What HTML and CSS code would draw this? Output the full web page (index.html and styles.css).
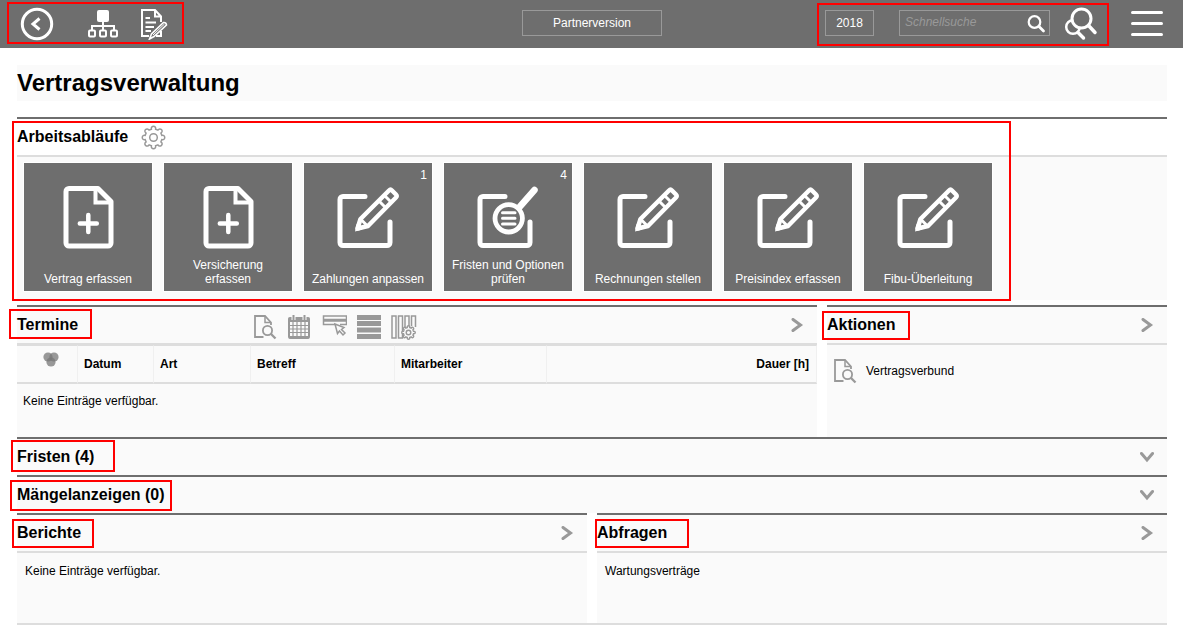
FILE: index.html
```html
<!DOCTYPE html>
<html lang="de">
<head>
<meta charset="utf-8">
<title>Vertragsverwaltung</title>
<link rel="stylesheet" href="styles.css">
</head>
<body>
<svg class="sprite" aria-hidden="true">
  <symbol id="doc-plus" viewBox="0 0 64 64">
    <g fill="none" stroke="#fff" stroke-width="5" stroke-linejoin="round" stroke-linecap="round">
      <path d="M13 3.500H42L55 16.500V58a3 3 0 0 1-3 3H13a3 3 0 0 1-3-3V6.500a3 3 0 0 1 3-3Z"/>
      <path d="M39.500 5V17.500H54" stroke-width="4" stroke-linejoin="miter"/>
      <path d="M32.300 30V47M23.800 38.500H40.800" stroke-width="4.500"/>
    </g>
  </symbol>
  <symbol id="edit" viewBox="0 0 64 64">
    <g fill="none" stroke="#fff" stroke-width="5" stroke-linejoin="round" stroke-linecap="round">
      <path d="M29 11.500H7a3 3 0 0 0-3 3V57.500a3 3 0 0 0 3 3H51a3 3 0 0 0 3-3V37"/>
      <path d="M21.500 43.500L24.500 34L53 5.500Q54.500 4 56 5.500L60 9.500Q61.500 11 60 12.500L32 41Z" stroke-width="4.500"/>
      <path d="M25 34.500L31 40.500M43 16L49.500 22.500M48.500 10.500L55 17" stroke-width="3"/>
      <path d="M19 46.500L20.500 39L26.500 44.500Z" fill="#fff" stroke="none"/>
    </g>
  </symbol>
  <symbol id="inspect" viewBox="0 0 64 64">
    <g fill="none" stroke="#fff" stroke-width="5" stroke-linejoin="round" stroke-linecap="round">
      <path d="M29 11.500H7a3 3 0 0 0-3 3V57.500a3 3 0 0 0 3 3H51a3 3 0 0 0 3-3V37"/>
      <circle cx="32.700" cy="33.300" r="18" fill="#6e6e6e" stroke="none"/>
      <circle cx="32.700" cy="33.300" r="13.700" stroke-width="4.800"/>
      <path d="M44 21.500L58.500 5" stroke-width="6.500"/>
      <path d="M26.500 27.700H39M26.500 33.300H39M26.500 39H39" stroke-width="3"/>
    </g>
  </symbol>
  <symbol id="doc-search" viewBox="0 0 24 26">
    <g fill="none" stroke="#999" stroke-width="1.800">
      <path d="M10.500 23H2V2H12L18 8.500V11"/>
      <path d="M12 2V8.500H18" stroke-width="1.500"/>
      <circle cx="14.500" cy="16.500" r="4.600"/>
      <path d="M17.800 19.800L22.500 24.500" stroke-width="2.300"/>
    </g>
  </symbol>
  <symbol id="gear" viewBox="0 0 25 25">
    <path d="M10.400 4.200C9.500.3 15.500.3 14.600 4.200L16.900 5.100C19 1.800 23.200 6 19.900 8.100L20.800 10.400C24.700 9.500 24.700 15.500 20.800 14.600L19.900 16.900C23.200 19 19 23.200 16.900 19.900L14.600 20.800C15.500 24.700 9.500 24.700 10.400 20.800L8.100 19.900C6 23.200 1.800 19 5.100 16.900L4.200 14.600C.3 15.500.3 9.500 4.200 10.400L5.100 8.100C1.800 6 6 1.800 8.100 5.100Z"/>
    <circle cx="12.500" cy="12.500" r="3.800"/>
  </symbol>
  <symbol id="chevron-right" viewBox="0 0 14 14">
    <path d="M3 1.500L10.500 7L3 12.500" fill="none" stroke="#999" stroke-width="3" stroke-linecap="round"/>
  </symbol>
  <symbol id="chevron-down" viewBox="0 0 14 14">
    <path d="M1.500 3.500L7 10L12.500 3.500" fill="none" stroke="#999" stroke-width="3" stroke-linecap="round"/>
  </symbol>
</svg>

<header class="topbar">
  <nav class="topbar-left">
    <button class="icon-button" aria-label="Zurück">
      <svg width="34" height="34" viewBox="0 0 34 34" fill="none" stroke="#fff"><circle cx="17" cy="17" r="14.700" stroke-width="3"/><path d="M19.500 11.500L13 17L19.500 22.500" stroke-width="3"/></svg>
    </button>
    <button class="icon-button tree-button" aria-label="Struktur">
      <svg width="30" height="30" viewBox="0 0 30 30" fill="none" stroke="#fff" stroke-width="2"><rect x="9" y="1" width="12" height="12" rx="2" fill="#fff" stroke="none"/><path d="M15 12V21M4 21V17H26V21"/><rect x="1" y="21.500" width="6" height="6" rx="1"/><rect x="12" y="21.500" width="6" height="6" rx="1"/><rect x="23" y="21.500" width="6" height="6" rx="1"/></svg>
    </button>
    <button class="icon-button note-button" aria-label="Notizen">
      <svg width="28" height="32" viewBox="0 0 28 32" fill="none" stroke="#fff" stroke-width="2"><path d="M9 28H2V2H15L21 8.500V14M15 2V8.500H21M21 23V28H16"/><path d="M5.500 10H10M5.500 14.500H16M5.500 19H14M5.500 23H11" stroke-width="2"/><path d="M9.500 31L11.500 26L23.500 14.500Q26 14 26.500 17L14 28.500Z" stroke-width="1.600"/><path d="M13 27L24.500 16" stroke-width="1"/></svg>
    </button>
  </nav>
  <button class="box-button version-button">Partnerversion</button>
  <div class="topbar-right">
    <button class="box-button year-button">2018</button>
    <form class="search" role="search">
      <input class="search-input" type="text" placeholder="Schnellsuche" aria-label="Schnellsuche">
      <button class="icon-button" type="button" aria-label="Suchen">
        <svg width="20" height="20" viewBox="0 0 20 20" fill="none" stroke="#fff" stroke-linecap="round"><circle cx="8.500" cy="9" r="5.800" stroke-width="2.200"/><path d="M13 13.500L17.500 18" stroke-width="2.800"/></svg>
      </button>
    </form>
    <button class="icon-button multi-search" aria-label="Erweiterte Suche">
      <svg width="34" height="34" viewBox="0 0 34 34" fill="none" stroke="#fff" stroke-linecap="round"><circle cx="9" cy="20" r="6.800" stroke-width="2.500"/><path d="M14 25.500L19.500 31" stroke-width="3.500"/><circle cx="17.500" cy="11.500" r="9.500" fill="#6e6e6e" stroke-width="3"/><path d="M24.500 18.500L31 25.500" stroke-width="3.500"/></svg>
    </button>
    <button class="icon-button menu-button" aria-label="Menü">
      <svg width="34" height="28" viewBox="0 0 34 28" stroke="#fff" stroke-width="3" stroke-linecap="round"><path d="M2.500 2.500H31.500M2.500 13.500H31.500M2.500 24.500H31.500"/></svg>
    </button>
  </div>
  <span class="mark mark-nav"></span>
  <span class="mark mark-search"></span>
</header>

<main class="page">
  <h1 class="page-title">Vertragsverwaltung</h1>

  <section class="panel workflows">
    <div class="panel-head">
      <h2>Arbeitsabläufe</h2>
      <button class="icon-button gear-button" aria-label="Einstellungen"><svg class="gear" width="25" height="25"><use href="#gear"/></svg></button>
    </div>
    <div class="tiles">
      <button class="tile"><svg width="64" height="64"><use href="#doc-plus"/></svg><span class="tile-label">Vertrag erfassen</span></button>
      <button class="tile"><svg width="64" height="64"><use href="#doc-plus"/></svg><span class="tile-label">Versicherung erfassen</span></button>
      <button class="tile"><svg width="64" height="64"><use href="#edit"/></svg><span class="tile-label">Zahlungen anpassen</span><span class="badge">1</span></button>
      <button class="tile"><svg width="64" height="64"><use href="#inspect"/></svg><span class="tile-label">Fristen und Optionen prüfen</span><span class="badge">4</span></button>
      <button class="tile"><svg width="64" height="64"><use href="#edit"/></svg><span class="tile-label">Rechnungen stellen</span></button>
      <button class="tile"><svg width="64" height="64"><use href="#edit"/></svg><span class="tile-label">Preisindex erfassen</span></button>
      <button class="tile"><svg width="64" height="64"><use href="#edit"/></svg><span class="tile-label">Fibu-Überleitung</span></button>
    </div>
    <span class="mark mark-workflows"></span>
  </section>

  <div class="row row-wide">
    <section class="panel">
      <div class="panel-head">
        <h2 class="title-column">Termine</h2>
        <div class="tools">
          <button class="icon-button" aria-label="Vorschau"><svg width="24" height="26"><use href="#doc-search"/></svg></button>
          <button class="icon-button" aria-label="Kalender"><svg width="24" height="26" viewBox="0 0 24 26" fill="none" stroke="#999"><rect x="2" y="4" width="20" height="20" rx="1.500" stroke-width="2"/><path d="M1.500 3.500H22.500V8H1.500ZM2 22H22V24.500H2Z" fill="#999" stroke="none"/><path d="M6 8V22M10 8V22M14 8V22M18 8V22M2 11.500H22M2 15H22M2 18.500H22" stroke-width="1.200"/><path d="M6.500 1V6M17.500 1V6" stroke="#fafafa" stroke-width="4"/><path d="M6.500 1V6M17.500 1V6" stroke-width="2"/></svg></button>
          <button class="icon-button" aria-label="Auswahl"><svg width="26" height="26" viewBox="0 0 26 26" fill="none" stroke="#999" stroke-width="1.500"><path d="M2.500 2H25.500V5.500H2.500ZM14 10.500H2.500V7H25.500V10.500H19"/><path d="M14 10L16.500 19.500L18.500 17L22 21L24 19L20.500 15.500L23 13.500Z"/></svg></button>
          <button class="icon-button" aria-label="Zeilen"><svg width="24" height="26" viewBox="0 0 24 26" fill="#999"><path d="M0 1H24V6H0ZM0 7H24V12H0ZM0 13.500H24V18.500H0ZM0 20H24V25H0Z"/></svg></button>
          <button class="icon-button" aria-label="Spalten"><svg width="26" height="26" viewBox="0 0 26 26" fill="none" stroke="#999" stroke-width="1.500"><path d="M1 2H5V24H1ZM7.500 2H11.500V24H7.500ZM14 14V2H18V12M20.500 12V2H24.500V13"/><g class="mini-gear" transform="translate(10 11) scale(.6)"><use href="#gear" width="25" height="25"/></g></svg></button>
        </div>
        <button class="icon-button toggle" aria-label="Termine öffnen"><svg width="14" height="14"><use href="#chevron-right"/></svg></button>
      </div>
      <table class="dates">
        <thead>
          <tr>
            <th class="col-mark"><svg width="16" height="16" viewBox="0 0 16 16" fill="#777" fill-opacity=".75"><circle cx="5" cy="5" r="4.600"/><circle cx="11" cy="5" r="4.600"/><circle cx="8" cy="10" r="4.600"/></svg></th>
            <th class="col-date">Datum</th>
            <th class="col-kind">Art</th>
            <th class="col-subject">Betreff</th>
            <th class="col-staff">Mitarbeiter</th>
            <th class="col-hours">Dauer [h]</th>
          </tr>
        </thead>
        <tbody><tr><td colspan="6">Keine Einträge verfügbar.</td></tr></tbody>
      </table>
      <span class="mark mark-dates"></span>
    </section>
    <section class="panel">
      <div class="panel-head">
        <h2>Aktionen</h2>
        <button class="icon-button toggle" aria-label="Aktionen öffnen"><svg width="14" height="14"><use href="#chevron-right"/></svg></button>
      </div>
      <a class="action" href="#"><svg width="24" height="26"><use href="#doc-search"/></svg>Vertragsverbund</a>
      <span class="mark mark-actions"></span>
    </section>
  </div>

  <section class="panel">
    <div class="panel-head closed">
      <h2>Fristen (4)</h2>
      <button class="icon-button toggle" aria-label="Fristen aufklappen"><svg width="14" height="14"><use href="#chevron-down"/></svg></button>
    </div>
    <span class="mark mark-deadlines"></span>
  </section>
  <section class="panel">
    <div class="panel-head closed">
      <h2>Mängelanzeigen (0)</h2>
      <button class="icon-button toggle" aria-label="Mängelanzeigen aufklappen"><svg width="14" height="14"><use href="#chevron-down"/></svg></button>
    </div>
    <span class="mark mark-defects"></span>
  </section>

  <div class="row row-last">
    <section class="panel">
      <div class="panel-head">
        <h2>Berichte</h2>
        <button class="icon-button toggle" aria-label="Berichte öffnen"><svg width="14" height="14"><use href="#chevron-right"/></svg></button>
      </div>
      <p class="panel-text">Keine Einträge verfügbar.</p>
      <span class="mark mark-reports"></span>
    </section>
    <section class="panel">
      <div class="panel-head">
        <h2>Abfragen</h2>
        <button class="icon-button toggle" aria-label="Abfragen öffnen"><svg width="14" height="14"><use href="#chevron-right"/></svg></button>
      </div>
      <p class="panel-text"><a href="#">Wartungsverträge</a></p>
      <span class="mark mark-queries"></span>
    </section>
  </div>
</main>
</body>
</html>
```
FILE: styles.css
```css
* { box-sizing: border-box; }

body {
  margin: 0;
  background: #fff;
  color: #000;
  font: 12px/14px "Liberation Sans", Arial, sans-serif;
}

h1, h2, p { margin: 0; }
a { color: inherit; text-decoration: none; }
svg { display: block; flex: none; }
button, input { font: inherit; color: inherit; }
.sprite { position: absolute; width: 0; height: 0; }

.icon-button {
  display: block;
  padding: 0;
  border: 0;
  background: none;
  cursor: pointer;
}

/* Top bar */
.topbar {
  position: relative;
  display: grid;
  grid-template-columns: 1fr auto 1fr;
  align-items: center;
  height: 48px;
  padding: 0 19px 0 20px;
  background: #6e6e6e;
  color: #fff;
}
.topbar-left, .topbar-right { display: flex; align-items: center; }
.topbar-right { justify-content: flex-end; }
.tree-button { margin-left: 34px; }
.note-button { margin-left: 22px; }
.box-button {
  height: 26px;
  padding: 0;
  border: 1px solid #999;
  background: none;
  cursor: pointer;
}
.version-button { width: 140px; }
.year-button { width: 49px; }
.box-button, .search { margin-bottom: 2px; }
.search {
  display: flex;
  align-items: center;
  width: 151px;
  height: 26px;
  margin-left: 25px;
  padding-right: 3px;
  border: 1px solid #999;
}
.search-input {
  flex: 1;
  min-width: 0;
  padding: 0 5px 2px;
  border: 0;
  outline: 0;
  background: none;
  font-style: italic;
}
.search-input::placeholder { color: #999; opacity: 1; }
.multi-search { margin-left: 14px; }
.menu-button { margin-left: 32px; }

/* Page */
.page { padding: 17px 16px 8px 17px; }
.page-title {
  margin-bottom: 16px;
  background: #fafafa;
  font-size: 24px;
  line-height: 36px;
}
h2 { font-size: 16px; line-height: 18px; }

.panel {
  position: relative;
  border-top: 2px solid #6e6e6e;
  background: #fafafa;
}
.panel-head {
  display: flex;
  align-items: center;
  height: 38px;
  padding-right: 13px;
  border-bottom: 2px solid #ddd;
}
.panel-head.closed { height: 36px; border-bottom: 0; }
.toggle { margin-left: auto; }
.title-column { width: 236px; }
.tools { display: flex; align-items: center; gap: 10px; padding-top: 4px; }

.gear-button { margin-left: 13px; }
.gear, .mini-gear { fill: none; stroke: #999; stroke-width: 1.500px; }
.mini-gear { fill: #fafafa; stroke-width: 2.400px; }

/* Workflow tiles */
.workflows { margin-bottom: 5px; }
.workflows .panel-head { background: #fff; }
.tiles { display: flex; flex-wrap: wrap; gap: 10px; padding: 5px 6px 8px; }
.tile {
  position: relative;
  display: flex;
  flex-direction: column;
  align-items: center;
  justify-content: space-between;
  width: 130px;
  height: 130px;
  padding: 22px 6px 5px;
  border: 1px solid #fff;
  background: #6e6e6e;
  color: #fff;
  cursor: pointer;
}
.badge { position: absolute; top: 5px; right: 5px; }

/* Panel rows */
.row { display: grid; gap: 10px; }
.row-wide { grid-template-columns: 80fr 34fr; }
.row-last { grid-template-columns: 1fr 1fr; border-bottom: 2px solid #ddd; }

.dates {
  width: 100%;
  table-layout: fixed;
  border-collapse: separate;
  border-spacing: 0;
}
.dates th {
  height: 39px;
  padding: 0 7px 0 6px;
  border-top: 1px solid #ddd;
  border-right: 1px solid #f0f0f0;
  border-bottom: 2px solid #ddd;
  text-align: left;
}
.dates td { height: 53px; padding: 10px 6px 9px; vertical-align: top; }
.col-mark { width: 61px; }
.col-mark svg { margin: 0 auto 9px 20px; }
.col-date { width: 76px; }
.col-kind { width: 97px; }
.col-subject { width: 144px; }
.col-staff { width: 152px; }
.dates .col-hours { text-align: right; }

.action {
  display: flex;
  align-items: center;
  gap: 9px;
  padding: 13px 6px;
}
.panel-text { min-height: 70px; padding: 11px 8px; }

/* Red highlight frames */
.mark {
  position: absolute;
  border: 2px solid #f00;
  pointer-events: none;
}
.mark-nav { left: 7px; top: 2px; width: 177px; height: 42px; }
.mark-search { right: 74px; top: 3px; width: 292px; height: 43px; }
.mark-workflows { left: -5px; top: 2px; width: 999px; height: 180px; }
.mark-dates { left: -8px; top: 2px; width: 83px; height: 30px; }
.mark-actions { left: -5px; top: 4px; width: 88px; height: 29px; }
.mark-deadlines { left: -6px; top: 1px; width: 104px; height: 32px; }
.mark-defects { left: -7px; top: 3px; width: 162px; height: 31px; }
.mark-reports { left: -5px; top: 4px; width: 82px; height: 29px; }
.mark-queries { left: -2px; top: 4px; width: 94px; height: 29px; }
```
